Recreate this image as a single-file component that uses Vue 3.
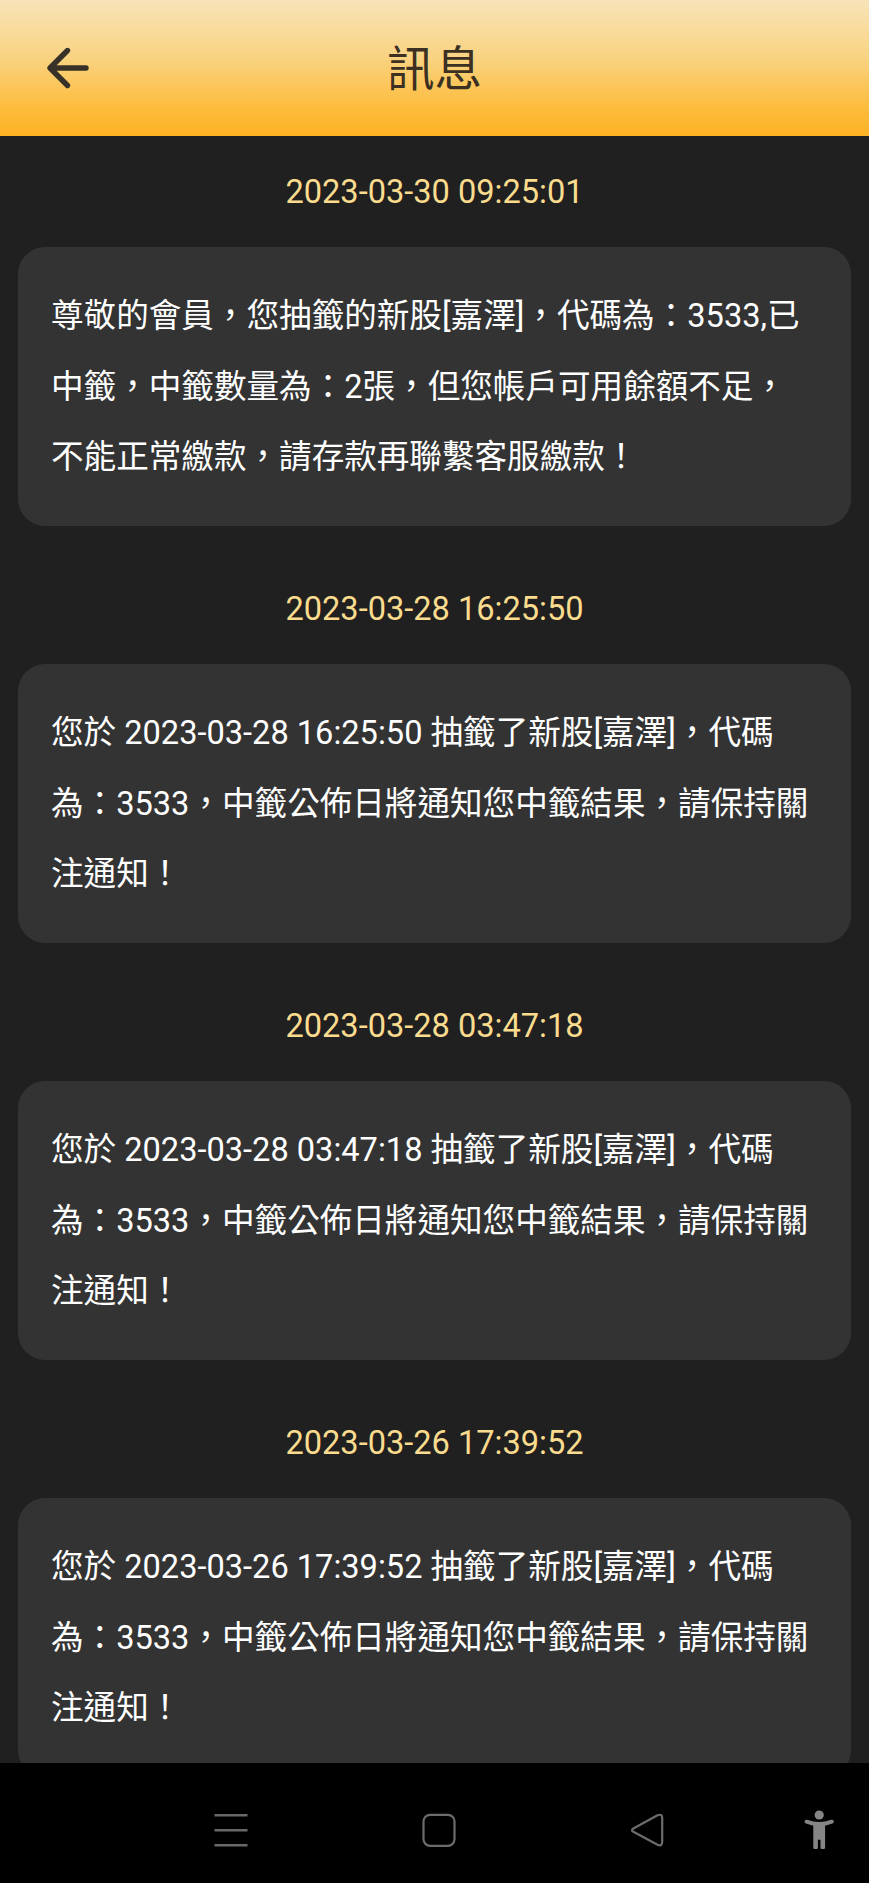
<script setup>
const notice = (time) => ({
  time,
  lines: [
    `您於 ${time} 抽籤了新股[嘉澤]，代碼`,
    '為：3533，中籤公佈日將通知您中籤結果，請保持關',
    '注通知！',
  ],
})

const messages = [
  {
    time: '2023-03-30 09:25:01',
    lines: [
      '尊敬的會員，您抽籤的新股[嘉澤]，代碼為：3533,已',
      '中籤，中籤數量為：2張，但您帳戶可用餘額不足，',
      '不能正常繳款，請存款再聯繫客服繳款！',
    ],
  },
  notice('2023-03-28 16:25:50'),
  notice('2023-03-28 03:47:18'),
  notice('2023-03-26 17:39:52'),
]
</script>

<template>
  <div class="screen">
    <header class="header">
      <button class="back" aria-label="返回">
        <svg width="44" height="44" viewBox="0 0 44 44" fill="none">
          <path d="M21.5 4.5 4 22l17.500 17.500M4.500 22H40" stroke="#383127" stroke-width="5.400" stroke-linecap="round" stroke-linejoin="round" />
        </svg>
      </button>
      <h1 class="title">訊息</h1>
    </header>

    <main class="list">
      <section v-for="m in messages" :key="m.time" class="message">
        <time class="time">{{ m.time }}</time>
        <div class="card">
          <div v-for="line in m.lines" :key="line" class="line">{{ line }}</div>
        </div>
      </section>
    </main>

    <nav class="navbar">
      <svg class="icon menu" width="36" height="36" viewBox="0 0 36 36" fill="none" stroke="#686868" stroke-width="2.600">
        <path d="M1.500 3.300h33M1.500 18.300h33M1.500 33.300h33" />
      </svg>
      <svg class="icon home" width="36" height="36" viewBox="0 0 36 36" fill="none" stroke="#6c6c6c" stroke-width="2.200">
        <rect x="2.500" y="2.800" width="31" height="31" rx="6.500" />
      </svg>
      <svg class="icon prev" width="36" height="36" viewBox="0 0 36 36" fill="none" stroke="#6c6c6c" stroke-width="2.200" stroke-linejoin="round">
        <path d="M4.400 16.500 28.500 3.200Q33.200 1.500 33.200 6V29.800Q33.200 34.600 28.500 32.800L4.400 19.800Q1.600 18.200 4.400 16.500Z" />
      </svg>
      <svg class="icon person" width="36" height="42" viewBox="0 0 36 42">
        <circle cx="18.200" cy="6" r="4.600" fill="#858585" />
        <path d="M5.600 12.700Q18.200 17.500 30.800 12.700" fill="none" stroke="#858585" stroke-width="4" stroke-linecap="round" />
        <path d="M12.300 14h11.800v24.800q0 1.200-1.200 1.200h-2.200q-1.200 0-1.200-1.200V30.800h-2.600v8q0 1.200-1.200 1.200h-2.200q-1.200 0-1.200-1.200z" fill="#858585" />
      </svg>
    </nav>
  </div>
</template>

<style>
body {
  background: #000;
}
</style>

<style scoped>
.screen {
  display: flex;
  flex-direction: column;
  width: 869px;
  height: 1883px;
  overflow: hidden;
  background: #202020;
  font-family: Roboto, "Noto Sans CJK TC", sans-serif;
}
.header {
  flex: none;
  display: grid;
  grid-template-columns: 134px 1fr 134px;
  align-items: center;
  height: 136px;
  background: linear-gradient(#f8e3b8, #f9d382 42%, #fdbd3f 78%, #feb224);
}
.back {
  display: flex;
  margin: 0;
  padding: 0 0 0 46px;
  border: 0;
  background: none;
}
.title {
  margin: 0;
  padding-top: 3px;
  text-align: center;
  font-size: 47.5px;
  font-weight: 400;
  line-height: 70px;
  color: #3b3021;
}
.list {
  flex: 1;
  min-height: 0;
  overflow: hidden;
}
.message {
  height: 417px;
}
.time {
  display: block;
  box-sizing: border-box;
  height: 111px;
  padding-top: 1px;
  line-height: 111px;
  text-align: center;
  font-size: 32.6px;
  color: #fbdc8e;
}
.card {
  box-sizing: border-box;
  height: 278.500px;
  margin: 0 18px;
  padding: 34px 0 33px 33px;
  border-radius: 27px;
  background: #333;
}
.line {
  height: 70.500px;
  line-height: 70.500px;
  font-size: 32.6px;
  color: #fff;
  white-space: nowrap;
}
.navbar {
  flex: none;
  display: grid;
  grid-template-columns: 335px 208px 207px 1fr;
  align-items: center;
  height: 120px;
  background: #000;
}
.icon {
  display: block;
  margin-top: 14px;
}
.menu {
  margin-left: 213px;
}
.home {
  margin-left: 86px;
}
.prev {
  margin-left: 86px;
}
.person {
  margin-left: 51px;
  margin-top: 14px;
}
</style>
